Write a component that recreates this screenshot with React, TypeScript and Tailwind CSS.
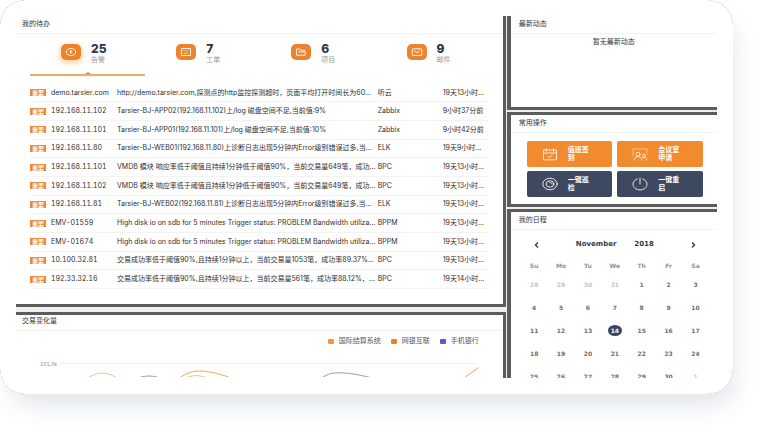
import { ReactNode } from "react";
import clsx from "clsx";

const tabs = [
  { label: "告警", count: 25, icon: "alert" },
  { label: "工单", count: 7, icon: "ticket" },
  { label: "项目", count: 6, icon: "folder" },
  { label: "邮件", count: 9, icon: "mail" },
];

const alerts = [
  ["demo.tarsier.com", "http://demo.tarsier.com,探测点的http监控探测超时，页面平均打开时间长为60...", "听云", "19天13小时..."],
  ["192.168.11.102", "Tarsier-BJ-APP02(192.168.11.102)上/log 磁盘空间不足,当前值:9%", "Zabbix", "9小时37分前"],
  ["192.168.11.101", "Tarsier-BJ-APP01(192.168.11.101)上/log 磁盘空间不足,当前值:10%", "Zabbix", "9小时42分前"],
  ["192.168.11.80", "Tarsier-BJ-WEB01(192.168.11.80)上诊断日志出现5分钟内Error级别错误过多,当...", "ELK", "19天9小时..."],
  ["192.168.11.101", "VMDB 模块 响应率低于阈值且持续1分钟低于阈值90%，当前交易量649笔，成功...", "BPC", "19天13小时..."],
  ["192.168.11.102", "VMDB 模块 响应率低于阈值且持续1分钟低于阈值90%，当前交易量649笔，成功...", "BPC", "19天13小时..."],
  ["192.168.11.81", "Tarsier-BJ-WEB02(192.168.11.81)上诊断日志出现5分钟内Error级别错误过多,当...", "ELK", "19天13小时..."],
  ["EMV-01559", "High disk io on sdb for 5 minutes Trigger status: PROBLEM Bandwidth utiliza...", "BPPM", "19天13小时..."],
  ["EMV-01674", "High disk io on sdb for 5 minutes Trigger status: PROBLEM Bandwidth utiliza...", "BPPM", "19天13小时..."],
  ["10.100.32.81", "交易成功率低于阈值90%,且持续1分钟以上，当前交易量1053笔，成功率89.37%...", "BPC", "19天13小时..."],
  ["192.33.32.16", "交易成功率低于阈值90%,且持续1分钟以上，当前交易量561笔，成功率88.12%，...", "BPC", "19天14小时..."],
];

const legend = [
  { label: "国际结算系统", color: "bg-[#e79a4c]" },
  { label: "网银互联", color: "bg-[#ee8127]" },
  { label: "手机银行", color: "bg-[#5a57dc]" },
];

const actions = [
  { lines: ["值班签", "到"], icon: "calendar", color: "bg-[#f28a2e]" },
  { lines: ["会议室", "申请"], icon: "meeting", color: "bg-[#f28a2e]" },
  { lines: ["一键巡", "检"], icon: "inspect", color: "bg-[#3d4960]" },
  { lines: ["一键重", "启"], icon: "power", color: "bg-[#3d4960]" },
];

const weekdays = ["Su", "Mo", "Tu", "We", "Th", "Fr", "Sa"];

const weeks = [
  [28, 29, 30, 31, 1, 2, 3],
  [4, 5, 6, 7, 8, 9, 10],
  [11, 12, 13, 14, 15, 16, 17],
  [18, 19, 20, 21, 22, 23, 24],
  [25, 26, 27, 28, 29, 30, 1],
];

function TabIcon({ name }: { name: string }) {
  return (
    <svg viewBox="0 0 12 10" className="h-[10px] w-3" fill="none" stroke="#fff3df" strokeWidth="1" strokeLinejoin="round">
      {name === "alert" && (
        <>
          <ellipse cx="6" cy="5" rx="4.6" ry="3.6" />
          <path d="M6 2.9v4.2M4.6 4.6h2.8" strokeWidth=".9" />
        </>
      )}
      {name === "ticket" && (
        <>
          <rect x="1.5" y="1.5" width="9" height="7" />
          <path d="M3.2 3.500h1.500M5.500 4l1 .8L8.600 3M3.500 6.500h4" strokeWidth=".7" />
        </>
      )}
      {name === "folder" && (
        <>
          <path d="M1.5 8.2V2h3.2l1 1.3h4v1.4" />
          <path d="M1.5 8.2h8.7V4.9H3.4" />
        </>
      )}
      {name === "mail" && (
        <>
          <rect x="1.2" y="1.8" width="9.6" height="6.6" rx=".6" />
          <path d="m2.8 3.4 3.2 2.3 3.2-2.3" />
        </>
      )}
    </svg>
  );
}

function ActionIcon({ name }: { name: string }) {
  return (
    <svg viewBox="0 0 16 14" className="h-[14px] w-4 shrink-0" fill="none" stroke="#fdf3e8" strokeWidth=".9" strokeLinecap="round">
      {name === "calendar" && (
        <>
          <rect x="1.5" y="3" width="13" height="9.8" rx=".6" />
          <path d="M1.5 6h13M4.5 1.8v2.4M11.5 1.8v2.4M6 9.3l1.5 1.3 2.8-2.6" />
        </>
      )}
      {name === "meeting" && (
        <>
          <path d="M1 9V2h14v5" strokeOpacity=".6" />
          <circle cx="6" cy="7.3" r="2.1" />
          <path d="M2.2 13c.2-2.2 1.7-3.4 3.8-3.4S9.7 10.8 9.9 13" />
          <circle cx="12" cy="8.6" r="1.5" />
          <path d="M10.8 10.8c2-.8 4 .2 4.2 2.2" />
        </>
      )}
      {name === "inspect" && (
        <>
          <ellipse cx="8" cy="7" rx="7.2" ry="5.8" />
          <ellipse cx="8" cy="7" rx="3.9" ry="3.2" />
          <path d="M8 5.5c1.4 0 2 .7 2 1.5" />
        </>
      )}
      {name === "power" && (
        <>
          <path d="M5.3 1.9C2.8 2.8 1 4.7 1 7.1c0 3.3 3.1 5.8 7 5.8s7-2.5 7-5.8c0-2.4-1.8-4.3-4.3-5.2" />
          <path d="M8 1v6" />
        </>
      )}
    </svg>
  );
}

function PanelTitle({ children }: { children: ReactNode }) {
  return (
    <h2 className="h-[18px] shrink-0 border-b border-[#f3f3f3] px-2 pt-px text-[7px] leading-[14px] text-[#333]">
      {children}
    </h2>
  );
}

function TodoPanel() {
  return (
    <section className="flex flex-col border-r-[3px] border-b-[3px] border-[#5c5c5c] bg-white pb-[15px]">
      <h2 className="h-[18px] border-b border-[#f3f3f3] px-[6px] pt-px text-[7px] leading-[14px] text-[#333]">我的待办</h2>
      <div className="mr-3 ml-[14px] grid grid-cols-4">
        {tabs.map((tab, i) => (
          <button
            key={tab.label}
            className={clsx(
              "relative flex h-[42px] items-start gap-[10px] border-b-2 pt-[9px] pl-[31px] text-left",
              i === 0 ? "border-[#efab62]" : "border-transparent"
            )}
          >
            <span
              className={clsx(
                "mt-px flex h-4 w-5 items-center justify-center rounded-[5px] bg-[#ec8330]",
                i === 0 && "shadow-[0_2px_5px_2px_#fbdcb0]"
              )}
            >
              <TabIcon name={tab.icon} />
            </span>
            <span className="flex flex-col">
              <span className="text-xs leading-3 font-extrabold text-[#2f3746]">{tab.count}</span>
              <span className="text-[7px] leading-[10px] text-[#999]">{tab.label}</span>
            </span>
            {i === 0 && (
              <span className="absolute bottom-0 left-1/2 h-0 w-0 -translate-x-1/2 border-x-[3px] border-b-2 border-x-transparent border-b-[#e58330]" />
            )}
          </button>
        ))}
      </div>
      <div className="mt-2 mr-[15px] ml-[14px]">
        <table className="h-[205px] w-full table-fixed border-collapse text-[7px] leading-[10px] whitespace-nowrap text-[#2e2e2e]">
          <colgroup>
            <col className="w-[21px]" />
            <col className="w-[66px]" />
            <col />
            <col className="w-[65px]" />
            <col className="w-[45px]" />
          </colgroup>
          <tbody>
            {alerts.map(([host, message, source, time], i) => (
              <tr key={i} className="border-b border-[#f3f3f3]">
                <td className="p-0">
                  <span className="block h-[7px] w-4 bg-[#ee8937] text-center text-[6px] leading-[7px] font-bold text-[#fff3e4]">重要</span>
                </td>
                <td className="p-0 tabular-nums">{host}</td>
                <td className="p-0">{message}</td>
                <td className="p-0">{source}</td>
                <td className="p-0">{time}</td>
              </tr>
            ))}
          </tbody>
        </table>
      </div>
    </section>
  );
}

function TradePanel() {
  return (
    <section className="flex-1 border-t-[3px] border-r-[3px] border-[#5c5c5c] bg-white">
      <h2 className="h-4 border-b border-[#f3f3f3] px-[6px] text-[7px] leading-3 text-[#333]">交易变化量</h2>
      <ul className="mt-[5px] mr-6 flex justify-end gap-[10px]">
        {legend.map((item) => (
          <li key={item.label} className="flex items-center gap-[5px] text-[7px] leading-[10px] text-[#555]">
            <span className={clsx("h-[5px] w-[6px] rounded-[1px]", item.color)} />
            {item.label}
          </li>
        ))}
      </ul>
      <div className="mt-[13px] mr-6 ml-6 flex items-start gap-[2px]">
        <span className="text-[5px] leading-[10px] text-[#888] tabular-nums">101.0k</span>
        <svg viewBox="0 0 422 18" preserveAspectRatio="none" className="h-[18px] min-w-0 flex-1" fill="none">
          <path d="M0 4.5h422" stroke="#f0f0f0" />
          <path d="M27 20.5C39 12 48 12 61 20.5" stroke="#f2bd7c" />
          <path d="M77 20c9-4 18-4 27 0" stroke="#9a9ca8" />
          <path d="M118 21c14-10 20-9.5 30-8.5s18 4 25 6.500" stroke="#e9a75a" />
          <path d="M126 20c8-4.5 16-4.5 25 0" stroke="#f0bd80" />
          <path d="M263 20c8-6 13-6.500 22-6.100s18 2.100 32 5.600" stroke="#9a9ca8" />
          <path d="m406 20 16-11.5" stroke="#eaa14d" />
        </svg>
      </div>
    </section>
  );
}

function QuickActions() {
  return (
    <div className="mr-[14px] ml-4 grid grid-cols-2 gap-x-[5px] gap-y-1 pt-2 pb-[7px]">
      {actions.map((action) => (
        <button
          key={action.icon}
          className={clsx("flex h-[26px] items-center gap-[10px] rounded-[2px] pl-[15px] text-left", action.color)}
        >
          <ActionIcon name={action.icon} />
          <span className="text-[7px] leading-2 font-bold text-white">
            {action.lines.map((line) => (
              <span key={line} className="block">{line}</span>
            ))}
          </span>
        </button>
      ))}
    </div>
  );
}

function Calendar() {
  return (
    <div className="mr-2 ml-[10px] font-['DejaVu_Sans',sans-serif] font-bold">
      <div className="flex h-[29px] items-center justify-between px-3 text-[7px] text-[#333a45]">
        <button aria-label="Previous month">
          <svg viewBox="0 0 7 8" className="h-2 w-[7px]" fill="none" stroke="currentColor" strokeWidth="1.4">
            <path d="M5 1.5 2.5 4 5 6.5" />
          </svg>
        </button>
        <span className="flex gap-[18px]">
          <span>November</span>
          <span>2018</span>
        </span>
        <button aria-label="Next month">
          <svg viewBox="0 0 7 8" className="h-2 w-[7px]" fill="none" stroke="currentColor" strokeWidth="1.4">
            <path d="M2 1.5 4.5 4 2 6.5" />
          </svg>
        </button>
      </div>
      <table className="w-full table-fixed text-center text-[6px] leading-[10px]">
        <thead>
          <tr className="text-[#939393]">
            {weekdays.map((day) => (
              <th key={day} className="h-[14px] p-0 text-center">{day}</th>
            ))}
          </tr>
        </thead>
        <tbody>
          {weeks.map((week, row) => (
            <tr key={row}>
              {week.map((day, col) => {
                const outside = (row === 0 && day > 7) || (row === 4 && day < 7);
                const selected = row === 2 && day === 14;
                return (
                  <td key={col} className={clsx("h-[23px] p-0", outside ? "text-[#c4c4c4]" : "text-[#6c6c6c]")}>
                    {selected ? (
                      <span className="mx-auto block h-[11px] w-[14px] rounded-[50%] bg-[#38455c] leading-[11px] text-white">{day}</span>
                    ) : (
                      day
                    )}
                  </td>
                );
              })}
            </tr>
          ))}
        </tbody>
      </table>
    </div>
  );
}

export default function App() {
  return (
    <div className="h-screen overflow-hidden bg-white pr-[27px] pb-[38px] font-['Inter','Noto_Sans_CJK_SC',sans-serif]">
      <main className="relative h-full rounded-3xl bg-white p-4 shadow-[6px_16px_26px_-6px_#dfe3e8]">
        <span className="absolute top-0 left-0 size-6 rounded-tl-3xl border-t border-l border-dotted border-[#ccc]" />
        <span className="absolute top-0 right-0 size-6 rounded-tr-3xl border-t border-r border-dotted border-[#ccc]" />
        <span className="absolute bottom-0 left-0 size-6 rounded-bl-3xl border-b border-l border-dotted border-[#ccc]" />
        <span className="absolute right-0 bottom-0 size-6 rounded-br-3xl border-r border-b border-dotted border-[#ccc]" />
        <div className="flex h-full gap-px overflow-hidden bg-[#eee]">
          <div className="flex min-w-0 flex-1 flex-col gap-[5px]">
            <TodoPanel />
            <TradePanel />
          </div>
          <div className="flex w-[30%] flex-col gap-[2px]">
            <section className="h-[94px] shrink-0 border-b-[3px] border-l-4 border-[#5c5c5c] bg-white">
              <PanelTitle>最新动态</PanelTitle>
              <p className="pt-[3px] text-center text-[7px] leading-[10px] text-[#333]">暂无最新动态</p>
            </section>
            <section className="shrink-0 border-y-[3px] border-l-4 border-[#5c5c5c] bg-white">
              <PanelTitle>常用操作</PanelTitle>
              <QuickActions />
            </section>
            <section className="flex-1 border-t-[3px] border-l-4 border-[#5c5c5c] bg-white">
              <PanelTitle>我的日程</PanelTitle>
              <Calendar />
            </section>
          </div>
        </div>
      </main>
    </div>
  );
}
